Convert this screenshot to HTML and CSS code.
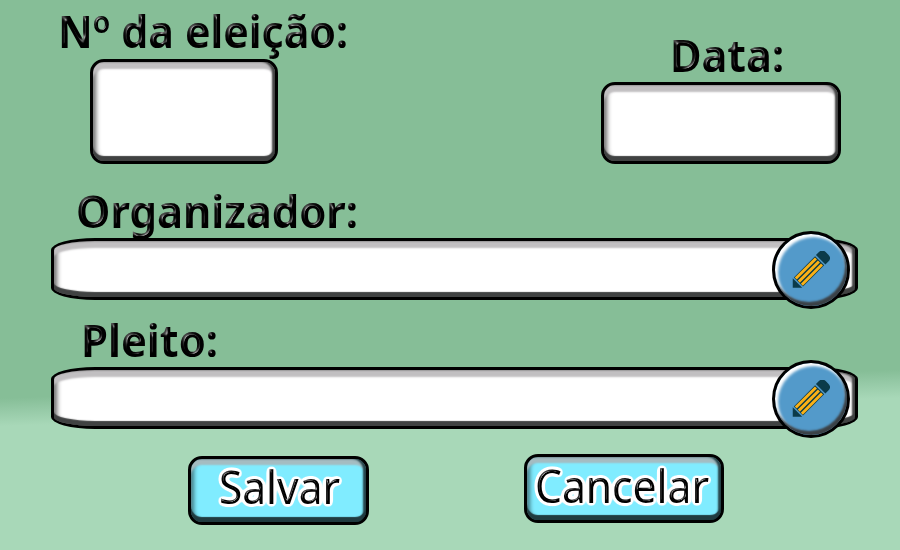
FILE: index.html
```html
<!DOCTYPE html>
<html lang="pt-BR">
<head>
<meta charset="utf-8">
<title>Eleição</title>
<link rel="stylesheet" href="styles.css">
</head>
<body>
<svg class="defs" width="0" height="0" aria-hidden="true">
  <defs>
    <filter id="bevel" x="-5%" y="-10%" width="110%" height="120%" color-interpolation-filters="sRGB">
      <feGaussianBlur in="SourceAlpha" stdDeviation="1.9" result="b"/>
      <feSpecularLighting in="b" surfaceScale="8" specularConstant="0.62" specularExponent="8" lighting-color="#ffffff" result="s">
        <feDistantLight azimuth="230" elevation="5"/>
      </feSpecularLighting>
      <feComposite in="s" in2="SourceAlpha" operator="in" result="c"/>
      <feMerge><feMergeNode in="SourceGraphic"/><feMergeNode in="c"/></feMerge>
    </filter>
    <filter id="halo" x="-8%" y="-15%" width="116%" height="130%" color-interpolation-filters="sRGB">
      <feGaussianBlur in="SourceAlpha" stdDeviation="2.1" result="wide"/>
      <feComponentTransfer in="wide" result="edge">
        <feFuncR type="linear" slope="0" intercept="1"/>
        <feFuncG type="linear" slope="0" intercept="1"/>
        <feFuncB type="linear" slope="0" intercept="1"/>
        <feFuncA type="linear" slope="16" intercept="-0.6"/>
      </feComponentTransfer>
      <feGaussianBlur in="SourceAlpha" stdDeviation="1.4" result="b"/>
      <feSpecularLighting in="b" surfaceScale="6" specularConstant="0.6" specularExponent="8" lighting-color="#ffffff" result="s">
        <feDistantLight azimuth="230" elevation="5"/>
      </feSpecularLighting>
      <feComposite in="s" in2="SourceAlpha" operator="in" result="c"/>
      <feMerge><feMergeNode in="edge"/><feMergeNode in="SourceGraphic"/><feMergeNode in="c"/></feMerge>
    </filter>
    <symbol id="pencil" viewBox="0 0 40 40">
      <g transform="translate(.8 38.6) rotate(-45)">
        <path d="M0 0L7-7V7Z" fill="#0b3b49"/>
        <path d="M8.500-6.800H40V6.800H8.500Z" fill="#0b3b49"/>
        <path d="M9-4.500H39M9 0H39M9 4.500H39" stroke="#fbb116" stroke-width="3"/>
        <path d="M41.500-7H46Q51-7 51-2V2Q51 7 46 7H41.500Z" fill="#0b3b49"/>
      </g>
    </symbol>
  </defs>
</svg>
<form class="page">
  <div class="top">
    <div class="field number">
      <svg class="label" width="290" height="59"><text x="-1" y="48" textLength="290" lengthAdjust="spacingAndGlyphs">N<tspan class="ordinal" dy="3">º</tspan><tspan dy="-3"> da eleição:</tspan></text></svg>
      <div class="box"></div>
    </div>
    <div class="field date">
      <svg class="label" width="120" height="59"><text x="0" y="48.500" textLength="114" lengthAdjust="spacingAndGlyphs">Data:</text></svg>
      <div class="box"></div>
    </div>
  </div>
  <div class="field wide organizer">
    <svg class="label" width="290" height="59"><text x="0" y="48.500" textLength="282" lengthAdjust="spacingAndGlyphs">Organizador:</text></svg>
    <div class="box"><button type="button" class="edit" aria-label="Editar"><svg width="38" height="38"><use href="#pencil"/></svg></button></div>
  </div>
  <div class="field wide ballot">
    <svg class="label" width="150" height="59"><text x="1" y="48.500" textLength="137" lengthAdjust="spacingAndGlyphs">Pleito:</text></svg>
    <div class="box"><button type="button" class="edit" aria-label="Editar"><svg width="38" height="38"><use href="#pencil"/></svg></button></div>
  </div>
  <div class="actions">
    <button type="button" class="box action save"><svg width="175" height="63"><text x="28" y="45" textLength="121" lengthAdjust="spacingAndGlyphs">Salvar</text></svg></button>
    <button type="button" class="box action cancel"><svg width="194" height="63"><text x="8" y="46" textLength="174" lengthAdjust="spacingAndGlyphs">Cancelar</text></svg></button>
  </div>
</form>
</body>
</html>
```
FILE: styles.css
```css
* { box-sizing: border-box; }
body {
  margin: 0;
  width: 900px;
  height: 550px;
  overflow: hidden;
  font-family: "Noto Sans", "Open Sans", sans-serif;
  background: linear-gradient(178.2deg, #86be97 0, #86be97 398px, #95c9a6 410px, #a8d8b8 426px);
}
.defs { position: absolute; }
svg { display: block; overflow: visible; }
.page { display: flex; flex-direction: column; height: 550px; }
.top {
  display: flex;
  justify-content: space-between;
  align-items: flex-end;
  height: 164px;
  padding: 0 59px 0 90px;
}
.label { font-size: 45px; font-weight: 700; }
.label text { filter: url(#bevel); }
.ordinal { font-size: 48px; font-weight: 600; }
.box {
  border: 3px solid #000;
  border-radius: 14px;
  background: #fff;
  box-shadow: inset 0 -5px 1px #404242, inset -3px 0 2px #444, inset 0 7px 2px #c1bfc1, inset 3px 0 5px #666;
}
.number { width: 188px; }
.number .label { margin-left: -31px; }
.number .box { height: 105px; }
.date { width: 240px; }
.date .label { margin-left: 69px; }
.date .box { height: 82px; }
.wide { width: 807px; margin-left: 51px; }
.wide .box {
  display: flex;
  align-items: center;
  justify-content: flex-end;
  height: 62px;
  padding-right: 5px;
  border-radius: 44px / 12px;
}
.organizer { margin-top: 15px; }
.organizer .label { margin-left: 25px; }
.ballot { margin-top: 8px; }
.ballot .label { margin-left: 29px; }
.edit {
  flex: none;
  display: flex;
  align-items: center;
  justify-content: center;
  width: 78px;
  height: 78px;
  margin-top: 2px;
  padding: 0;
  border: 3px solid #000;
  border-radius: 50%;
  background: #539aca;
  box-shadow: inset -2px -4px 2px #3b4146, inset 3px 3px 3px #fff, inset 0 0 3px 1px #b5d0e4;
}
.actions { display: flex; align-items: flex-start; padding: 25px 0 0 188px; }
.action {
  padding: 0;
  height: 69px;
  background: #80ecff;
  box-shadow: inset 0 -5px 1px #203b40, inset -3px 0 2px #25444a, inset 0 6px 2px #a5bcc1, inset 3px 0 4px #407882;
}
.save { width: 181px; margin-top: 2px; }
.cancel { width: 200px; margin-left: 155px; }
.action text {
  font-family: "Noto Sans", "Open Sans", sans-serif;
  font-size: 46px;
  font-weight: 400;
  filter: url(#halo);
}
```
